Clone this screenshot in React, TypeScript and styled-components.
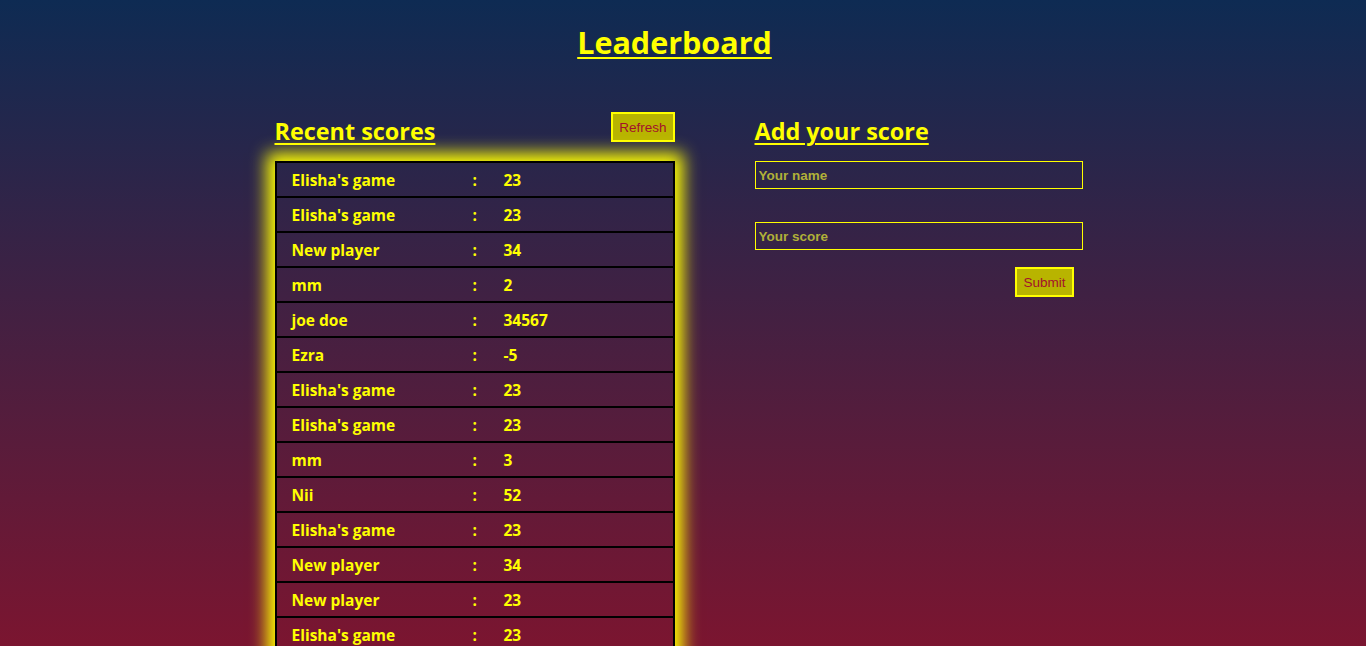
import React from 'react';
import styled, { createGlobalStyle } from 'styled-components';

interface IScore {
	user: string;
	score: number;
}

const scores: IScore[] = [
	{ user: "Elisha's game", score: 23 },
	{ user: "Elisha's game", score: 23 },
	{ user: 'New player', score: 34 },
	{ user: 'mm', score: 2 },
	{ user: 'joe doe', score: 34567 },
	{ user: 'Ezra', score: -5 },
	{ user: "Elisha's game", score: 23 },
	{ user: "Elisha's game", score: 23 },
	{ user: 'mm', score: 3 },
	{ user: 'Nii', score: 52 },
	{ user: "Elisha's game", score: 23 },
	{ user: 'New player', score: 34 },
	{ user: 'New player', score: 23 },
	{ user: "Elisha's game", score: 23 },
	{ user: 'Nii', score: 40 },
	{ user: 'joe doe', score: 12 },
	{ user: "Elisha's game", score: 23 },
	{ user: 'New player', score: 34 },
	{ user: 'mm', score: 7 },
	{ user: 'Ezra', score: 18 },
	{ user: "Elisha's game", score: 23 },
	{ user: 'New player', score: 34 },
];

function App() {
	return (
		<>
			<GlobalStyle />
			<Wrapper>
				<Titulo>Leaderboard</Titulo>
				<Colunas>
					<Coluna>
						<CabecalhoColuna>
							<Subtitulo>Recent scores</Subtitulo>
							<Botao type="button">Refresh</Botao>
						</CabecalhoColuna>
						<Lista>
							{scores.map((s, ind) => (
								<Linha key={ind}>
									<span>{s.user}</span>
									<span>:</span>
									<span>{s.score}</span>
								</Linha>
							))}
						</Lista>
					</Coluna>
					<Coluna>
						<CabecalhoColuna>
							<Subtitulo>Add your score</Subtitulo>
						</CabecalhoColuna>
						<Formulario onSubmit={(e) => e.preventDefault()}>
							<Campo type="text" placeholder="Your name" />
							<Campo type="number" placeholder="Your score" />
							<BotaoSubmit type="submit">Submit</BotaoSubmit>
						</Formulario>
					</Coluna>
				</Colunas>
			</Wrapper>
		</>
	);
}

export default App;

const GlobalStyle = createGlobalStyle`
	html, body {
		margin: 0;
		padding: 0;
	}
	body {
		min-height: 100vh;
		background: linear-gradient(to bottom, #0e2b53, #7b1530) fixed;
		font-family: "Comic Sans MS", "Open Sans", sans-serif;
		color: #ffff00;
	}
`;

// padding-right stands in for the scrollbar gutter of the original page
const Wrapper = styled.div`
	display: flex;
	flex-direction: column;
	align-items: center;
	padding: 0 17px 24px 0;
`;

const Titulo = styled.h1`
	margin: 21px 0 0;
	font-size: 30.5px;
	line-height: 42px;
	font-weight: 700;
	text-decoration: underline;
	text-decoration-thickness: 2px;
	text-underline-offset: 3px;
`;

const Colunas = styled.div`
	display: grid;
	grid-template-columns: 400px 320px;
	column-gap: 80px;
	width: 800px;
	margin-top: 49px;
`;

const Coluna = styled.div`
	display: flex;
	flex-direction: column;
`;

const CabecalhoColuna = styled.div`
	display: flex;
	justify-content: space-between;
	align-items: flex-start;
	height: 49px;
`;

const Subtitulo = styled.h2`
	margin: 3px 0 0;
	font-size: 23.4px;
	line-height: 32px;
	font-weight: 700;
	text-decoration: underline;
	text-decoration-thickness: 2px;
	text-underline-offset: 3px;
`;

const Botao = styled.button`
	height: 30px;
	padding: 0 6px;
	background: #b8b400;
	border: 2px solid #ffff00;
	color: #a3112c;
	font-family: "Liberation Sans", Arial, sans-serif;
	font-size: 13.5px;
	cursor: pointer;
`;

const BotaoSubmit = styled(Botao)`
	align-self: flex-end;
	margin-right: 1px;
`;

const Lista = styled.div`
	display: flex;
	flex-direction: column;
	border: 2px solid #000;
	border-bottom: none;
	box-shadow: 0 0 16px 8px #ffff00;
`;

const Linha = styled.div`
	display: grid;
	grid-template-columns: 181px 31px 1fr;
	align-items: center;
	height: 33px;
	padding-left: 15px;
	border-bottom: 2px solid #000;
	font-size: 15.5px;
	font-weight: 700;
`;

const Formulario = styled.form`
	display: flex;
	flex-direction: column;
	gap: 33px;
	& > button {
		margin-top: -16px;
	}
`;

const Campo = styled.input`
	width: 100%;
	height: 26px;
	padding: 0 3px;
	background: transparent;
	border: 1px solid #ffff00;
	color: #ffff00;
	font-family: "Liberation Sans", Arial, sans-serif;
	font-size: 13.5px;
	box-sizing: content-box;
	&::placeholder {
		color: #b0b038;
		font-weight: 700;
	}
	&::-webkit-outer-spin-button,
	&::-webkit-inner-spin-button {
		-webkit-appearance: none;
		margin: 0;
	}
`;
